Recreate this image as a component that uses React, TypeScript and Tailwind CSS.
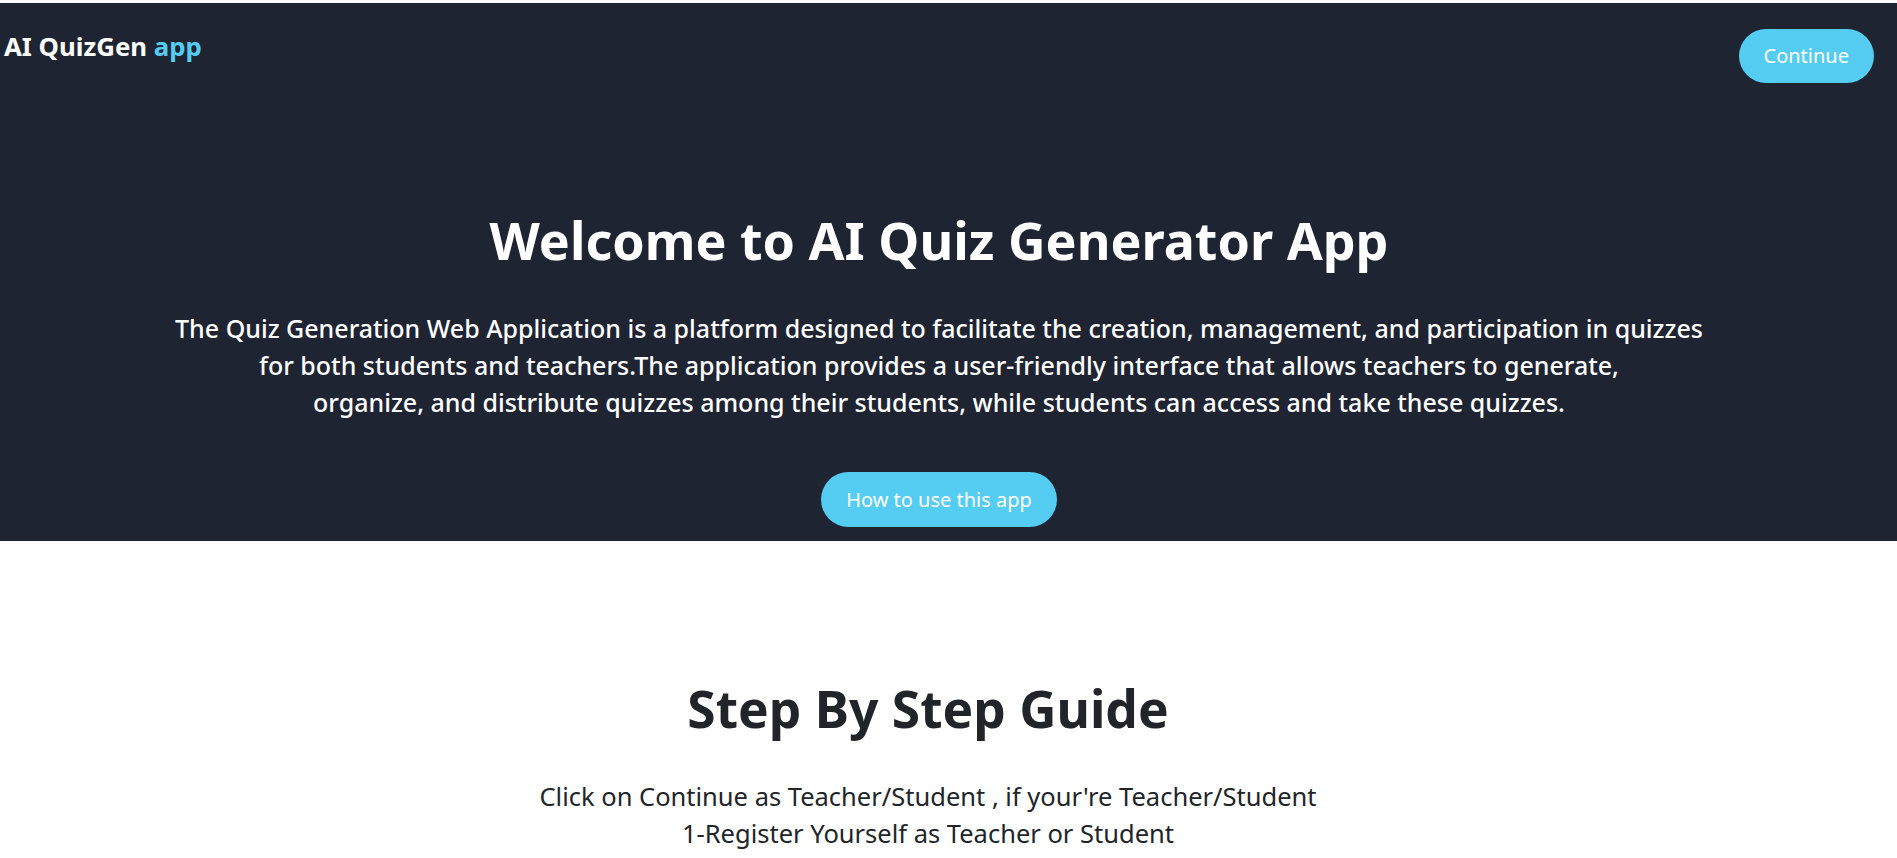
export default function App() {
  return (
    <div className="min-h-screen bg-white pt-[3px] font-['Noto_Sans',sans-serif] text-[#212529]">
      {/* Hero */}
      <section className="bg-[#1f2433] h-[538px]">
        <header className="flex justify-between items-start pt-[26px] pl-1 pr-[23px]">
          <h1 className="text-[25.8px] leading-8 font-bold text-white mt-px">
            AI QuizGen <span className="text-[#55ccf2]">app</span>
          </h1>
          <button className="h-[54px] px-[25px] rounded-full bg-[#55ccf2] text-white text-xl">
            Continue
          </button>
        </header>

        <div className="flex flex-col items-center text-center text-white pr-[19px]">
          <h2 className="mt-[126px] text-[52px] leading-[62px] font-bold">
            Welcome to AI Quiz Generator App
          </h2>
          <p className="mt-[39px] max-w-[1545px] text-[25px] leading-[37px] font-medium">
            The Quiz Generation Web Application is a platform designed to facilitate the creation, management, and participation in quizzes
            <br />
            for both students and teachers.The application provides a user-friendly interface that allows teachers to generate,
            <br />
            organize, and distribute quizzes among their students, while students can access and take these quizzes.
          </p>
          <button className="mt-[51px] h-[55px] px-[25px] rounded-full bg-[#55ccf2] text-white text-xl">
            How to use this app
          </button>
        </div>
      </section>

      {/* Guide */}
      <section className="flex flex-col items-center text-center pr-[41px] pb-16">
        <h2 className="mt-[138px] text-[51.5px] leading-[58px] font-bold text-[#212529]">
          Step By Step Guide
        </h2>
        <div className="mt-[41px] text-[25.5px] leading-[37px]">
          <p>Click on Continue as Teacher/Student , if your're Teacher/Student</p>
          <p>1-Register Yourself as Teacher or Student</p>
        </div>
      </section>
    </div>
  )
}
